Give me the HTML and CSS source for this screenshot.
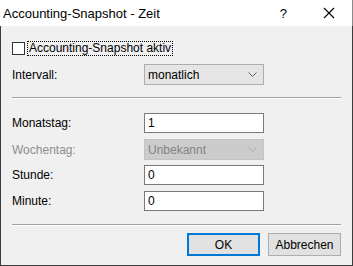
FILE: index.html
```html
<!DOCTYPE html>
<html lang="de">
<head>
    <meta charset="UTF-8">
    <title>Accounting-Snapshot - Zeit</title>
    <link rel="stylesheet" href="styles.css">
</head>
<body>
    <div class="window">
        <div class="titlebar">
            <span class="title">Accounting-Snapshot - Zeit</span>
            <span class="help">?</span>
            <svg class="close" width="12" height="12" viewBox="0 0 12 12">
                <path d="M1 1 L11 11 M11 1 L1 11" stroke="#000" stroke-width="1.1" fill="none"/>
            </svg>
        </div>

        <div class="dialog">
            <div class="check-row">
                <span class="checkbox"></span>
                <span class="check-label">Accounting-Snapshot aktiv</span>
            </div>

            <div class="row row-interval">
                <span class="label">Intervall:</span>
                <div class="combo">
                    <span>monatlich</span>
                    <svg width="9" height="5" viewBox="0 0 9 5"><path d="M0.5 0.5 L4.5 4.5 L8.5 0.5" stroke="#606060" fill="none"/></svg>
                </div>
            </div>

            <div class="separator sep-top"></div>

            <div class="row row-day">
                <span class="label">Monatstag:</span>
                <div class="field field-day">1</div>
            </div>
            <div class="row row-weekday">
                <span class="label disabled">Wochentag:</span>
                <div class="combo combo-disabled">
                    <span>Unbekannt</span>
                    <svg width="9" height="5" viewBox="0 0 9 5"><path d="M0.5 0.5 L4.5 4.5 L8.5 0.5" stroke="#a8a8a8" fill="none"/></svg>
                </div>
            </div>
            <div class="row row-hour">
                <span class="label">Stunde:</span>
                <div class="field">0</div>
            </div>
            <div class="row row-minute">
                <span class="label">Minute:</span>
                <div class="field">0</div>
            </div>

            <div class="separator sep-bottom"></div>

            <div class="buttons">
                <button type="button" class="btn btn-default">OK</button>
                <button type="button" class="btn">Abbrechen</button>
            </div>
        </div>
    </div>
</body>
</html>
```
FILE: styles.css
```css
body {
    margin: 0;
    padding: 0;
    font-family: "Liberation Sans", Arial, sans-serif;
    font-size: 12px;
    color: #000;
}
.window {
    width: 353px;
    height: 266px;
    box-sizing: border-box;
    border: 1px solid #3c3c3c;
    border-top: none;
    background-color: #f0f0f0;
    display: flex;
    flex-direction: column;
}
.titlebar {
    height: 26px;
    background-color: #fff;
    display: flex;
    align-items: center;
    padding-left: 3px;
    margin: 0 -1px;
    border-right: 1px solid #8a8a8a;
}
.title {
    font-size: 13px;
    flex: 1;
}
.help {
    font-size: 13px;
    margin-right: 36px;
}
.close {
    margin-right: 17px;
}
.dialog {
    padding: 0 11px;
    display: flex;
    flex-direction: column;
}
.check-row {
    display: flex;
    align-items: center;
    margin-top: 16px;
    height: 13px;
}
.checkbox {
    width: 11px;
    height: 11px;
    border: 1px solid #333;
    background-color: #fff;
}
.check-label {
    margin-left: 3px;
    outline: 1px dotted #000;
    padding: 0 1px;
    line-height: 13px;
}
.row {
    display: flex;
    align-items: center;
}
.label {
    width: 132px;
}
.label.disabled {
    color: #8d8d8d;
}
.row-interval { margin-top: 9px; }
.row-day { margin-top: 14px; }
.row-weekday { margin-top: 6px; }
.row-hour { margin-top: 5px; }
.row-minute { margin-top: 6px; }
.combo {
    width: 120px;
    height: 21px;
    box-sizing: border-box;
    border: 1px solid #adadad;
    background-color: #e5e5e5;
    display: flex;
    align-items: center;
    justify-content: space-between;
    padding: 0 6px 0 3px;
}
.combo-disabled {
    background-color: #cccccc;
    border-color: #c4c4c4;
    color: #838383;
}
.field {
    width: 120px;
    height: 20px;
    box-sizing: border-box;
    border: 1px solid #7a7a7a;
    background-color: #fff;
    padding-left: 3px;
    display: flex;
    align-items: center;
}
.separator {
    height: 1px;
    border-top: 1px solid #a0a0a0;
    background-color: #fff;
}
.sep-top { margin-top: 12px; }
.sep-bottom { margin-top: 13px; }
.buttons {
    display: flex;
    justify-content: flex-end;
    gap: 8px;
    margin-top: 7px;
}
.btn {
    width: 73px;
    height: 23px;
    font-family: "Liberation Sans", Arial, sans-serif;
    font-size: 12px;
    color: #000;
    background-color: #e1e1e1;
    border: 1px solid #adadad;
    padding: 0;
}
.btn-default {
    border: 2px solid #0078d7;
}
```
